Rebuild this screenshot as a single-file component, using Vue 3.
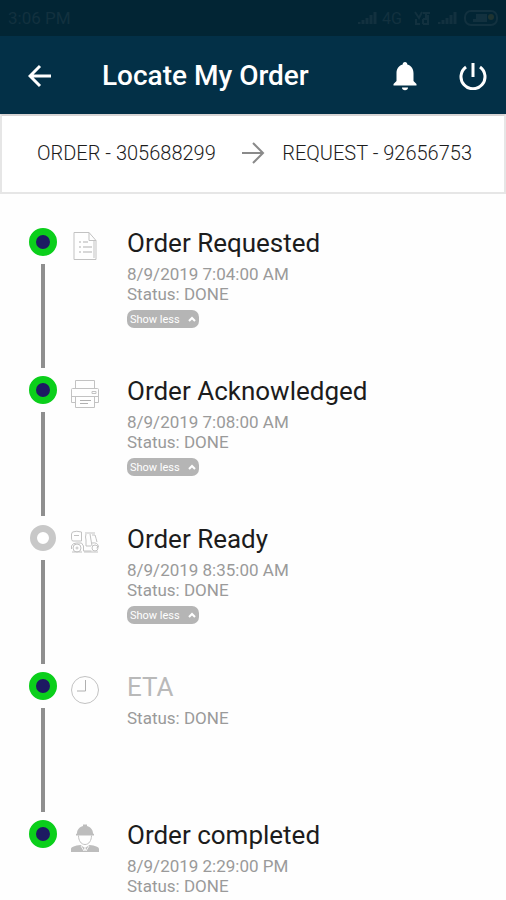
<template>
  <div class="screen">
    <div class="status-bar">
      <span>3:06 PM</span>
      <div class="status-icons">
        <svg class="signal" viewBox="0 0 20 14">
          <path d="M1 13v-2M5 13v-4M9 13V7M13 13V4M17 13V1" />
        </svg>
        <span class="network">4G</span>
        <svg class="volte" viewBox="0 0 18 14">
          <path d="M1 1l4 6 3-6M9 2h7M12 2v5M2 8v5h4M9 8v5M9 8h6M9 13h6M14 4v8" />
        </svg>
        <svg class="signal" viewBox="0 0 20 14">
          <path d="M1 13v-2M5 13v-4M9 13V7M13 13V4M17 13V1" />
        </svg>
        <svg class="battery" viewBox="0 0 34 16">
          <rect x="1" y="1" width="32" height="14" rx="6" />
          <path class="level" d="M12 4h11v8H9v-3h3z" />
          <circle cx="27" cy="7" r="3" />
        </svg>
      </div>
    </div>

    <header class="app-bar">
      <button class="icon-button" type="button" aria-label="Back">
        <svg viewBox="0 0 24 24" class="back">
          <path d="M23 12H2M12 2L2 12l10 10" />
        </svg>
      </button>
      <h1>Locate My Order</h1>
      <button class="icon-button" type="button" aria-label="Notifications">
        <svg viewBox="0 0 24 30" class="bell">
          <path d="M12 1c-1.500 0-2.300 1-2.300 2.500C5.500 4.700 3.500 8 3.500 12.500v7.500L.5 23v1.500h23V23l-3-3v-7.500c0-4.500-2-7.800-6.200-9C14.300 2 13.500 1 12 1z" />
          <path d="M9 26.500h6c0 1.700-1.300 2.700-3 2.700s-3-1-3-2.700z" />
        </svg>
      </button>
      <button class="icon-button" type="button" aria-label="Log out">
        <svg viewBox="0 0 28 28" class="power">
          <path d="M14 1v14M7 5a12 12 0 1 0 14 0" />
        </svg>
      </button>
    </header>

    <section class="summary">
      <span>ORDER - 305688299</span>
      <svg viewBox="0 0 24 24" class="arrow">
        <path d="M1 12h21M12 2l10 10-10 10" />
      </svg>
      <span>REQUEST - 92656753</span>
    </section>

    <ol class="timeline">
      <li v-for="step in steps" :key="step.title" class="step">
        <div class="track">
          <span class="dot" :class="{ pending: step.pending }"></span>
        </div>

        <svg class="step-icon" viewBox="0 0 28 28">
          <g v-if="step.icon === 'document'">
            <path d="M3 .5h15l7 8v19H3zM18 .5v8h7M23 9v17" />
            <path class="dark" d="M8 10h2M12 10h5M8 15h2M12 15h9M8 20h2M12 20h9" />
          </g>
          <g v-else-if="step.icon === 'printer'">
            <path d="M4.500 8V.5h19V8M1.500 8.500h25q1 0 1 1v13h-4M4.500 22.500h-4v-13q0-1 1-1M.5 16.500h27M4.500 16.500v11h19v-11M21 11.500h4v2h-4z" />
            <path class="dark" d="M9 20.500h11M9 23.500h8" />
          </g>
          <g v-else-if="step.icon === 'scooter'">
            <path d="M1.500 4q4-1.500 9 0v9h-9q-1-1-1-3V6zM3 7.500h5M.5 21v-3q1-3 5-3h5l2 3v5h8M14 5h10M15 6q-1 3 0 6v6h5M19 6l2 12M21 7h3q1 3 2 7M21 15q6-1 6.500 4l-2 1M1 24h10M13 24h14" />
            <circle cx="6" cy="20" r="4" />
            <circle cx="6" cy="20" r="1" />
            <circle cx="24" cy="20" r="3" />
          </g>
          <g v-else-if="step.icon === 'clock'">
            <circle cx="14" cy="14" r="13.500" />
            <path class="dark" d="M14.500 4v11H6" />
          </g>
          <g v-else>
            <path class="solid" d="M6 9.500C6 5.500 8.500 3 12 2V.5h4V2c3.500 1 6 3.500 6 7.500l1 .5v1.500H5V10z" />
            <path d="M7.500 11.500c0 5 2.500 9 6.500 9s6.500-4 6.500-9" />
            <path class="solid" d="M0 28v-3c0-2 4-3.500 9.500-4l4.500 3 4.500-3c5.500.5 9.500 2 9.500 4v3z" />
            <path class="collar" d="M10 22l3 5 1-3 1 3 3-5" />
          </g>
        </svg>

        <div class="details">
          <h2 :class="{ muted: step.muted }">{{ step.title }}</h2>
          <p v-if="step.time">{{ step.time }}</p>
          <p>Status: DONE</p>
          <button v-if="step.expandable" class="toggle" type="button">
            Show less
            <svg viewBox="0 0 8 6"><path d="M1 5l3-3 3 3" /></svg>
          </button>
        </div>
      </li>
    </ol>
  </div>
</template>

<script setup>
import { ref } from 'vue'

const steps = ref([
  { title: 'Order Requested', time: '8/9/2019 7:04:00 AM', icon: 'document', expandable: true },
  { title: 'Order Acknowledged', time: '8/9/2019 7:08:00 AM', icon: 'printer', expandable: true },
  { title: 'Order Ready', time: '8/9/2019 8:35:00 AM', icon: 'scooter', expandable: true, pending: true },
  { title: 'ETA', icon: 'clock', muted: true },
  { title: 'Order completed', time: '8/9/2019 2:29:00 PM', icon: 'worker' },
])
</script>

<style>
body {
  margin: 0;
  background: #fefefe;
}
</style>

<style scoped>
.screen {
  font-family: Roboto, 'Liberation Sans', sans-serif;
  color: #1c1c1c;
}

svg {
  display: block;
  flex: none;
  fill: none;
  stroke: currentColor;
}

button {
  padding: 0;
  border: 0;
  background: none;
  font-family: inherit;
  color: inherit;
  cursor: pointer;
}

.status-bar {
  display: flex;
  align-items: center;
  justify-content: space-between;
  height: 36px;
  padding: 0 8px;
  background: #022534;
  color: #12313f;
  font-size: 17px;
}

.status-icons {
  display: flex;
  align-items: center;
  gap: 4px;
}

.network {
  font-size: 16px;
}

.signal {
  width: 20px;
  height: 14px;
  stroke-width: 3;
}

.volte {
  width: 18px;
  height: 14px;
  margin: 0 2px 0 8px;
  stroke-width: 2;
}

.battery {
  width: 34px;
  height: 16px;
  margin-left: 2px;
  stroke-width: 2;
}

.battery .level {
  fill: currentColor;
  stroke: none;
}

.battery circle {
  fill: #1f3431;
  stroke: none;
}

.app-bar {
  display: flex;
  align-items: center;
  box-sizing: border-box;
  height: 78px;
  padding: 2px 17px 0 24px;
  background: #033047;
  color: #fff;
}

.app-bar h1 {
  flex: 1;
  margin: 0 0 0 46px;
  font-size: 28px;
  font-weight: 500;
  line-height: 32px;
}

.icon-button {
  display: flex;
  align-items: center;
  justify-content: center;
  width: 32px;
  height: 40px;
}

.icon-button + .icon-button {
  margin-left: 36px;
}

.back {
  width: 24px;
  height: 24px;
  stroke-width: 3;
}

.bell {
  width: 24px;
  height: 30px;
  fill: currentColor;
  stroke: none;
}

.power {
  width: 28px;
  height: 28px;
  stroke-width: 3;
}

.summary {
  display: flex;
  align-items: center;
  justify-content: space-between;
  box-sizing: border-box;
  height: 80px;
  padding: 0 32px 2px 35px;
  border: 2px solid #e6e6e6;
  border-top-color: #d8d4d4;
  background: #fff;
  font-size: 20px;
  font-weight: 300;
}

.arrow {
  width: 24px;
  height: 24px;
  margin-left: 8px;
  color: #8a8a8a;
  stroke-width: 2;
}

.timeline {
  margin: 0;
  padding: 34px 16px 0 28px;
  list-style: none;
}

.step {
  display: flex;
  min-height: 148px;
}

.step:last-child {
  min-height: 0;
}

.track {
  display: flex;
  flex-direction: column;
  align-items: center;
  width: 30px;
}

.step:not(:last-child) .track::after {
  content: '';
  flex: 1;
  width: 4px;
  margin: 8px 0;
  background: #8f8f8f;
}

.dot {
  box-sizing: border-box;
  width: 28px;
  height: 28px;
  border: 7px solid #0bcf1b;
  border-radius: 50%;
  background: #1d1a62;
}

.dot.pending {
  width: 26px;
  height: 26px;
  margin: 1px;
  border-color: #c8c8c8;
  background: #fff;
}

.step-icon {
  width: 28px;
  height: 28px;
  margin: 4px 28px 0 13px;
  color: #c2c2c2;
}

.step-icon .dark {
  stroke: #b0b0b0;
}

.step-icon .solid {
  fill: #bdbdbd;
  stroke: none;
}

.step-icon .collar {
  stroke: #f4f4f4;
}

.details h2 {
  margin: 0 0 6px;
  font-size: 26px;
  font-weight: 400;
  line-height: 30px;
}

.details h2.muted {
  color: #b9b9b9;
}

.details p {
  margin: 0;
  color: #9a9a9a;
  font-size: 17px;
  line-height: 20px;
}

.toggle {
  display: flex;
  align-items: center;
  justify-content: space-between;
  width: 72px;
  height: 18px;
  margin-top: 6px;
  padding: 0 3px;
  border-radius: 7px;
  background: #b5b5b5;
  color: #fff;
  font-size: 11px;
}

.toggle svg {
  width: 8px;
  height: 6px;
  stroke-width: 2;
}
</style>
